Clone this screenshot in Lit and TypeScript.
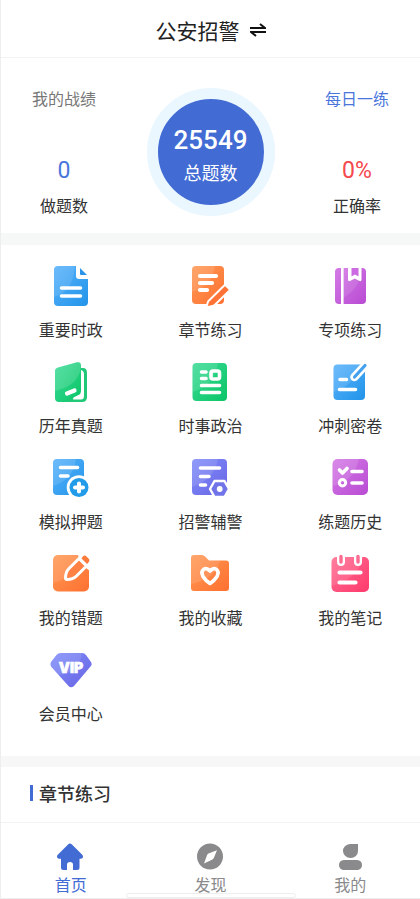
import { LitElement, html, svg, css } from "lit";
import { customElement } from "lit/decorators.js";
import { classMap } from "lit/directives/class-map.js";

const icons = {
  doc: svg`
    <path fill="url(#blue)" d="M9 2H27V12Q27 15 30 15H39V38Q39 42 35 42H9Q5 42 5 38V6Q5 2 9 2Z"/>
    <path fill="#fff" opacity=".12" d="M9 2H26Q24 28 5 33V6Q5 2 9 2Z"/>
    <path fill="#2b93e8" d="M31 4L38 11H32Q31 11 31 10Z"/>
    <path class="w" d="M12.500 24H31.500M12.500 32H31.500"/>`,
  chapter: svg`
    <rect x="4" y="2" width="32" height="38" rx="4" fill="url(#orange)"/>
    <path fill="#fff" opacity=".12" d="M8 2H27Q24 22 4 28V6Q4 2 8 2Z"/>
    <path class="wf" d="M12 12H28M12 19H24M12 26H19"/>
    <path fill="#ff7436" stroke="#fff" stroke-width="2" d="M36.200 21.500Q37 21 37.800 21.600L41.400 25Q42 25.800 41.300 26.600L27.500 40.200Q26 41.800 23.500 42.300L20 43Q18.600 43 18.800 41.500L20.200 37.200Z"/>`,
  book: svg`
    <rect x="7" y="4" width="31" height="36" rx="4" fill="url(#purple)"/>
    <path fill="#fff" opacity=".1" d="M15 4H33Q33 24 15 34Z"/>
    <path fill="#fff" d="M13 4H15.600V40H13ZM20 4H33.500V15.500Q33.500 18 31 16.800L26.800 14.500L22.500 16.800Q20 18 20 15.500Z"/>
    <path fill="#cb6ae2" d="M23.500 4H30.500V12.500L27 10.500L23.500 12.500Z"/>`,
  papers: svg`
    <path fill="#20c878" d="M12 8H34Q38 8 38 13V37Q38 42 33 42H12Z"/>
    <path fill="#fff" d="M30 9.500Q35 10 35 14V36Q35 39.500 32 39.500H24Z"/>
    <path fill="url(#green)" d="M9 7.500L28 2.300Q32 1.500 32 5.500V31Q32 34 29.500 35L17 41Q14 42 10 42Q6 42 6 38V11Q6 8.500 9 7.500Z"/>
    <path fill="#fff" opacity=".14" d="M9 7.500L28 2.300Q32 1.500 32 5.500Q31 25 6 31V11Q6 8.500 9 7.500Z"/>
    <path class="wf" d="M18 33.500L25.500 30.500"/>`,
  news: svg`
    <rect x="4.500" y="3" width="34.500" height="38" rx="4" fill="url(#green)"/>
    <path fill="#fff" opacity=".12" d="M8 3H30Q26 26 4.500 32V7Q4.500 3 8 3Z"/>
    <path class="w" d="M13.500 12H18M13.500 18.500H18M13.500 25.500H31.500M13.500 32.500H31.500"/>
    <rect x="23" y="11" width="8.500" height="8" rx="2" fill="none" stroke="#fff" stroke-width="3.600"/>`,
  sprint: svg`
    <rect x="5.500" y="4.500" width="31.500" height="35.500" rx="4" fill="url(#blue)"/>
    <path fill="#fff" opacity=".12" d="M9 4.500H32Q26 26 5.500 32V8Q5.500 4.500 9 4.500Z"/>
    <path fill="none" stroke="#fff" stroke-width="8.500" stroke-linecap="round" d="M26.500 17L37 5.500"/>
    <path fill="none" stroke="#43a1f0" stroke-width="3.200" stroke-linecap="round" d="M26.500 17L37 5.500"/>
    <path class="w" d="M12 19.500H18.500M11.500 29.500H27.500"/>`,
  mock: svg`
    <rect x="4" y="3" width="31" height="36" rx="4" fill="url(#blue)"/>
    <path fill="#fff" opacity=".12" d="M8 3H27Q24 24 4 30V7Q4 3 8 3Z"/>
    <path class="w" d="M11.500 11.500H28.500M11.500 20H19"/>
    <circle cx="30" cy="31.500" r="12.300" fill="#fff"/>
    <circle cx="30" cy="31.500" r="9.500" fill="#229be8"/>
    <path stroke="#fff" stroke-width="4" stroke-linecap="round" d="M30 27.500V35.500M26 31.500H34"/>`,
  police: svg`
    <rect x="4" y="3" width="35" height="36" rx="4" fill="url(#indigo)"/>
    <path fill="#fff" opacity=".12" d="M8 3H30Q26 24 4 31V7Q4 3 8 3Z"/>
    <path class="w" d="M12.500 12H31.500M12.500 20.500H21M12.500 29H17.500"/>
    <path fill="#7174e8" stroke="#fff" stroke-width="2.400" stroke-linejoin="round" d="M26.500 25H36.500L41 33L36.500 41H26.500L22 33Z"/>
    <circle cx="31.700" cy="33" r="2.900" fill="#fff"/>`,
  history: svg`
    <rect x="4.500" y="3" width="35.500" height="36" rx="5" fill="url(#purple)"/>
    <path fill="#fff" opacity=".12" d="M9 3H31Q26 26 4.500 30V8Q4.500 3 9 3Z"/>
    <path class="w" d="M11.500 14L14.500 17L19 12.500M24 15.500H34M24 27H34"/>
    <circle cx="14.500" cy="26.800" r="3.200" fill="none" stroke="#fff" stroke-width="3"/>`,
  wrong: svg`
    <rect x="4" y="3" width="36" height="36.500" rx="5" fill="url(#orange)"/>
    <path fill="#fff" opacity=".12" d="M9 3H31Q26 26 4 31V8Q4 3 9 3Z"/>
    <path fill="#fff" d="M29 2H41V19L37 16L30 9Z"/>
    <path fill="#ff7b3c" d="M33.500 5Q35.500 2.500 37.500 4.500L39.500 6.500Q41.500 8.500 39 11L38 12L32.500 6.500Z"/>
    <path fill="#ff8143" stroke="#fff" stroke-width="3" stroke-linejoin="round" d="M30 6.500L20 16.500Q16.500 20 16.500 26Q16.500 27.500 18 27.500Q24 27.500 27.500 24L37.500 14Z"/>`,
  favorite: svg`
    <path fill="url(#orange)" d="M6 3H14Q15.500 3 17 4.500L21 8.500H38Q41 8.500 41 11.500V36Q41 39 38 39H6Q3 39 3 36V6Q3 3 6 3Z"/>
    <path fill="#fff" opacity=".12" d="M6 3H14Q15.500 3 17 4.500L21 8.500H32Q28 27 3 32V6Q3 3 6 3Z"/>
    <path fill="none" stroke="#fff" stroke-width="3.600" stroke-linejoin="round" d="M22 19Q19 15.500 16 17Q12.500 19.500 15 24.500Q17.500 28.500 22 31.500Q26.500 28.500 29 24.500Q31.500 19.500 28 17Q25 15.500 22 19Z"/>`,
  notes: svg`
    <rect x="3.500" y="5" width="37.500" height="35" rx="5" fill="url(#pink)"/>
    <path fill="#fff" opacity=".1" d="M8 5H35Q30 27 3.500 34V10Q3.500 5 8 5Z"/>
    <path stroke="#fff" stroke-width="8" stroke-linecap="round" d="M13 4V10M30 4V10"/>
    <path stroke="#ff6a90" stroke-width="3.400" stroke-linecap="round" d="M13 4.500V10M30 4.500V10"/>
    <path class="wf" d="M11.500 20.500H32.500M11.500 30.500H27.500"/>`,
  vip: svg`
    <path fill="url(#indigo)" d="M12 5H33Q35.500 5 37 7L42 14Q43.500 16.500 41.500 18.500L25 38Q22 40.500 19.500 38L2 18.500Q.5 16.500 2 14L7.500 7Q9 5 12 5Z"/>
    <path fill="#fff" opacity=".12" d="M12 5H33Q30 26 9 27L2 18.500Q.5 16.500 2 14L7.500 7Q9 5 12 5Z"/>
    <text class="vip" x="22" y="25" text-anchor="middle">VIP</text>`,
  home: svg`<path d="M11.300 1.200Q13 0 14.700 1.200L25.500 12Q27 15 24 15.800H22.500V24.500Q22.500 27 20 27H16V21.500Q16 19 13 19Q10 19 10 21.500V27H6.500Q4 27 4 24.500V15.800H2Q-1 15 .5 12Z"/>`,
  compass: svg`<path fill-rule="evenodd" d="M13 .5A13 13 0 1 1 13 26.500A13 13 0 1 1 13 .5ZM20 7.200L12 10.200Q10.500 10.800 10 12.200L7 20.500L15 16.800Q16.200 16.200 16.800 15Z"/>`,
  user: svg`<path d="M13 1H21V8A7.500 7 0 1 1 13 1ZM7 17H20Q25 17.500 25 22Q25 26 21 27H6Q2 26 2 22Q2 17.500 7 17Z"/>`,
};

type IconName = keyof typeof icons;

const gradients: [string, string, string][] = [
  ["blue", "#58b2fb", "#2294e9"],
  ["orange", "#ff9a56", "#ff7030"],
  ["purple", "#d47ae6", "#b94bd3"],
  ["green", "#3bdb97", "#0bc566"],
  ["indigo", "#7f8dfa", "#6a65e4"],
  ["pink", "#ff7093", "#ff3a6d"],
];

@customElement("app-icon")
class AppIcon extends LitElement {
  static properties = { name: {}, size: { type: Number } };
  declare name: IconName;
  declare size: number;

  static styles = css`
    :host { display: block; }
    svg { display: block; overflow: visible; fill: currentColor; }
    .w, .wf { fill: none; stroke: #fff; stroke-width: 3.6; stroke-linecap: round; stroke-linejoin: round; }
    .wf { stroke-width: 4.2; }
    .vip { fill: #fff; stroke: #fff; stroke-width: .6; font: 900 14px Inter, "Open Sans", sans-serif; }
  `;

  render() {
    const s = this.size;
    return html`<svg width=${s} height=${s} viewBox="0 0 ${s} ${s}" aria-hidden="true">
      <defs>${gradients.map(([id, a, b]) => svg`
        <linearGradient id=${id} x1="0" y1="0" x2="1" y2="1">
          <stop offset="0" stop-color=${a}/><stop offset="1" stop-color=${b}/>
        </linearGradient>`)}</defs>
      ${icons[this.name]}
    </svg>`;
  }
}

const menu: [IconName, string][] = [
  ["doc", "重要时政"], ["chapter", "章节练习"], ["book", "专项练习"],
  ["papers", "历年真题"], ["news", "时事政治"], ["sprint", "冲刺密卷"],
  ["mock", "模拟押题"], ["police", "招警辅警"], ["history", "练题历史"],
  ["wrong", "我的错题"], ["favorite", "我的收藏"], ["notes", "我的笔记"],
  ["vip", "会员中心"],
];

const tabs: [IconName, string][] = [["home", "首页"], ["compass", "发现"], ["user", "我的"]];

@customElement("app-root")
class AppRoot extends LitElement {
  static styles = css`
    :host {
      display: flex; flex-direction: column; box-sizing: border-box; min-height: 100vh;
      border-left: 1px solid #eee; border-bottom: 1px solid #eee; background: #fff;
      color: #333; font: 16px/24px "Noto Sans CJK SC", sans-serif;
    }
    a { color: inherit; text-decoration: none; }
    button { border: 0; padding: 0; background: none; color: inherit; font: inherit; cursor: pointer; }
    .header { display: flex; justify-content: center; padding: 14px 0 11px; border-bottom: 1px solid #f2f2f2; }
    .subject { display: flex; align-items: center; gap: 10px; font-size: 21px; line-height: 32px; color: #222; }
    .heading { margin: 0; font: inherit; }
    .swap { display: block; fill: none; stroke: #111; stroke-width: 2; }
    .stats {
      display: flex; justify-content: space-between; align-items: center; padding: 28px 31px 16px;
      border-bottom: 12px solid #f6f8f8;
    }
    .side { display: flex; flex-direction: column; align-items: center; }
    .caption { color: #777; }
    .link { color: #4a76dc; }
    .value { margin: 47px 0 8px; font-family: Roboto, sans-serif; font-size: 23px; line-height: 28px; color: #4a76dc; }
    .rate { color: #f5484d; }
    .total {
      display: flex; flex-direction: column; align-items: center; justify-content: center;
      box-sizing: border-box; width: 128px; height: 128px; padding-top: 8px;
      border: 11px solid #ebf7fe; border-radius: 50%; background: #426bd4;
      color: #fff; font-size: 18px; line-height: 32px;
    }
    .count { font-family: Roboto, sans-serif; font-size: 26px; font-weight: 500; }
    .menu {
      display: grid; grid-template-columns: repeat(3, 1fr); row-gap: 19px;
      padding: 19px 0 31px; border-bottom: 11px solid #f7f7f7;
    }
    .item { display: flex; flex-direction: column; align-items: center; gap: 9px; }
    .section { flex: 1; display: flex; align-items: flex-start; gap: 6px; padding: 12px 29px 15px; }
    .mark { width: 3px; height: 16px; margin-top: 6px; background: #426bd4; }
    .title { margin: 0; font-size: 18px; line-height: 28px; font-weight: 500; }
    .tabs {
      position: relative; display: grid; grid-template-columns: repeat(3, 1fr);
      padding: 20px 0 2px; border-top: 1px solid #f2f2f2; color: #8a8a8c;
    }
    .tab { display: flex; flex-direction: column; align-items: center; gap: 2px; }
    .active { color: #426bd4; }
    .indicator {
      position: absolute; bottom: 0; left: 50%; transform: translateX(-50%);
      box-sizing: border-box; width: 170px; height: 5px;
      border: 1px solid #eee; border-radius: 3px; background: #fff;
    }
  `;

  render() {
    return html`
      <header class="header">
        <button class="subject">
          <h1 class="heading">公安招警</h1>
          <svg class="swap" width="16" height="14" viewBox="0 0 16 14" aria-hidden="true">
            <path d="M0 5H15L10 1M16 9H1L6 13"/>
          </svg>
        </button>
      </header>
      <section class="stats">
        <div class="side">
          <span class="caption">我的战绩</span>
          <span class="value">0</span>
          <span>做题数</span>
        </div>
        <div class="total"><span class="count">25549</span><span>总题数</span></div>
        <div class="side">
          <a class="link" href="#daily">每日一练</a>
          <span class="value rate">0%</span>
          <span>正确率</span>
        </div>
      </section>
      <nav class="menu">
        ${menu.map(([icon, label]) => html`
          <a class="item" href="#${icon}"><app-icon name=${icon} size="44"></app-icon>${label}</a>`)}
      </nav>
      <section class="section">
        <span class="mark"></span>
        <h2 class="title">章节练习</h2>
      </section>
      <nav class="tabs">
        ${tabs.map(([icon, label], i) => html`
          <a class=${classMap({ tab: true, active: i === 0 })} href="#${icon}">
            <app-icon name=${icon} size="27"></app-icon>${label}
          </a>`)}
        <span class="indicator"></span>
      </nav>
    `;
  }
}
